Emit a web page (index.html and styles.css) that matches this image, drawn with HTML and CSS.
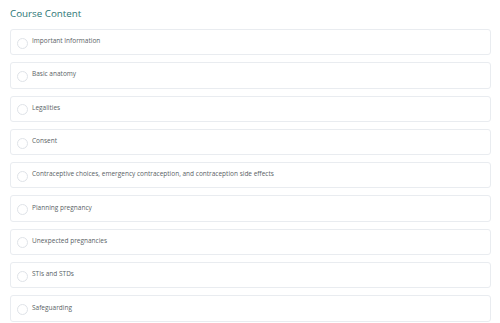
FILE: index.html
```html
<!DOCTYPE html>
<html lang="en">
<head>
<meta charset="utf-8">
<title>Course Content</title>
<link rel="stylesheet" href="styles.css">
</head>
<body>
<section class="course">
  <h2 class="course-title">Course Content</h2>
  <ul class="lessons">
    <li class="lesson"><span class="check"></span><span class="lesson-name">Important Information</span></li>
    <li class="lesson"><span class="check"></span><span class="lesson-name">Basic anatomy</span></li>
    <li class="lesson"><span class="check"></span><span class="lesson-name">Legalities</span></li>
    <li class="lesson"><span class="check"></span><span class="lesson-name">Consent</span></li>
    <li class="lesson"><span class="check"></span><span class="lesson-name">Contraceptive choices, emergency contraception, and contraception side effects</span></li>
    <li class="lesson"><span class="check"></span><span class="lesson-name">Planning pregnancy</span></li>
    <li class="lesson"><span class="check"></span><span class="lesson-name">Unexpected pregnancies</span></li>
    <li class="lesson"><span class="check"></span><span class="lesson-name">STIs and STDs</span></li>
    <li class="lesson"><span class="check"></span><span class="lesson-name">Safeguarding</span></li>
  </ul>
</section>
</body>
</html>
```
FILE: styles.css
```css
html, body {
  margin: 0;
  padding: 0;
  background: #ffffff;
}
body {
  font-family: "Open Sans", "Liberation Sans", sans-serif;
  overflow: hidden;
}
.course {
  padding: 7px 9px 0 10px;
}
.course-title {
  margin: 0 0 8px 0;
  font-size: 9.8px;
  line-height: 14px;
  font-weight: 500;
  color: #2b7575;
}
.lessons {
  list-style: none;
  margin: 0;
  padding: 0;
  display: flex;
  flex-direction: column;
  gap: 7px;
}
.lesson {
  height: 26.3px;
  box-sizing: border-box;
  border: 1px solid #e9ecf0;
  border-radius: 3px;
  display: flex;
  align-items: center;
  padding: 0 0 0 6px;
  gap: 4px;
}
.check {
  width: 9px;
  height: 9px;
  border: 1px solid #dfe3e8;
  border-radius: 50%;
  flex: none;
  margin-top: 2px;
}
.lesson-name {
  font-size: 6.5px;
  color: #5a5f66;
  margin-top: -3px;
}
```
